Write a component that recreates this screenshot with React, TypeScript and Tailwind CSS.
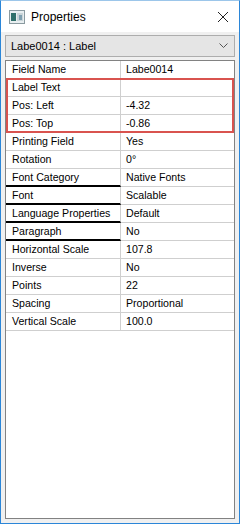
import React from 'react';

const rows: { name: string; value: string; bold?: boolean }[] = [
  { name: 'Field Name', value: 'Labe0014' },
  { name: 'Label Text', value: '' },
  { name: 'Pos: Left', value: '-4.32' },
  { name: 'Pos: Top', value: '-0.86' },
  { name: 'Printing Field', value: 'Yes' },
  { name: 'Rotation', value: '0°' },
  { name: 'Font Category', value: 'Native Fonts', bold: true },
  { name: 'Font', value: 'Scalable', bold: true },
  { name: 'Language Properties', value: 'Default', bold: true },
  { name: 'Paragraph', value: 'No', bold: true },
  { name: 'Horizontal Scale', value: '107.8' },
  { name: 'Inverse', value: 'No' },
  { name: 'Points', value: '22' },
  { name: 'Spacing', value: 'Proportional' },
  { name: 'Vertical Scale', value: '100.0' },
];

function Row({ name, value, bold }: { name: string; value: string; bold?: boolean }) {
  return (
    <div className="flex h-[18px] border-b border-[#cfcfcf]">
      <div className={`w-[115px] pl-[6px] pt-[1px] flex items-center border-r border-[#cfcfcf] ${bold ? 'border-b-2 border-b-black -mb-px' : ''}`}>
        {name}
      </div>
      <div className="flex-1 pl-[5px] pt-[1px] flex items-center">{value}</div>
    </div>
  );
}

export default function App() {
  return (
    <div className="w-[240px] h-[524px] border border-[#2b86d8] border-t-[#9cc6ea] bg-[#f0f0f0] flex flex-col font-['Liberation_Sans',Arial,sans-serif] text-[10.6px] text-black">
      {/* Title bar */}
      <div className="h-[31px] bg-white flex items-center shrink-0">
        <svg width="16" height="14" viewBox="0 0 16 14" className="ml-[8px]">
          <rect x="0.5" y="0.5" width="15" height="13" fill="#e8eef0" stroke="#8a9aa0" />
          <rect x="2" y="3" width="5" height="8" fill="#2f6f6a" />
          <rect x="8" y="3" width="6" height="8" fill="#c9d4d8" />
          <rect x="10" y="5" width="3" height="5" fill="#7fa0b0" />
        </svg>
        <span className="ml-[6px] text-[12px] font-['Segoe_UI','Liberation_Sans',sans-serif]">Properties</span>
        <svg width="12" height="12" viewBox="0 0 12 12" className="ml-auto mr-[10px]">
          <path d="M1 1 L11 11 M11 1 L1 11" stroke="#222" strokeWidth="1" />
        </svg>
      </div>

      <div className="flex-1 flex flex-col px-[4px] pt-[3px] pb-[4px]">
        {/* Dropdown */}
        <div className="h-[22px] flex items-center border border-[#adadad] bg-[#e5e5e5] pl-[5px] pr-[6px] shrink-0 text-[11px]">
          <span>Labe0014 : Label</span>
          <svg width="9" height="6" viewBox="0 0 9 6" className="ml-auto">
            <path d="M0.5 0.5 L4.5 4.5 L8.5 0.5" fill="none" stroke="#555" strokeWidth="1" />
          </svg>
        </div>

        {/* Property grid */}
        <div className="flex-1 mt-[3px] border border-[#828282] bg-white">
          <Row {...rows[0]} />
          <div className="relative">
            {rows.slice(1, 4).map((r) => (
              <Row key={r.name} {...r} />
            ))}
            <div className="absolute -top-px left-0 right-0 bottom-0 border-2 border-[#d9534f] pointer-events-none" />
          </div>
          {rows.slice(4).map((r) => (
            <Row key={r.name} {...r} />
          ))}
        </div>
      </div>
    </div>
  );
}
